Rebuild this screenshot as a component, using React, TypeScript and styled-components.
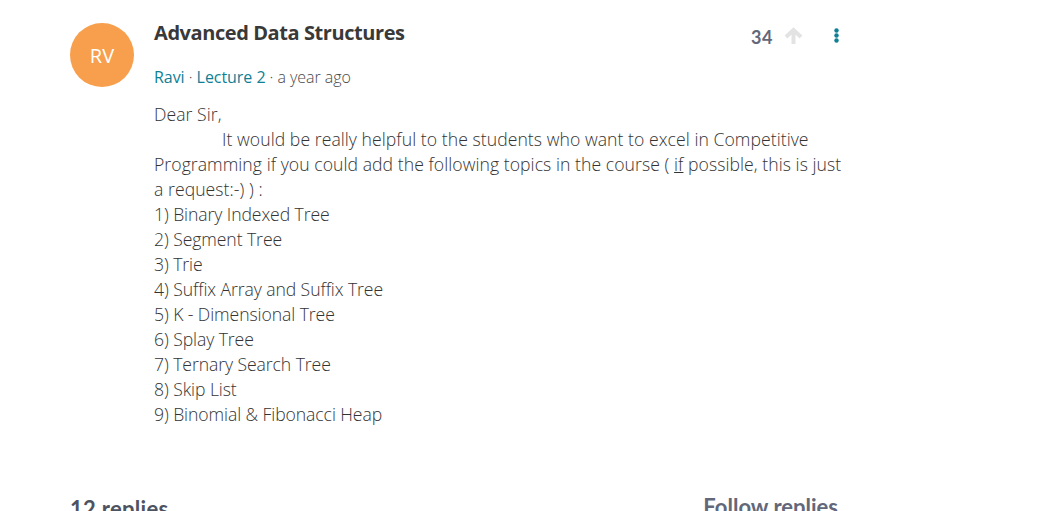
import React from "react";
import styled, {createGlobalStyle} from "styled-components";

const GlobalStyle = createGlobalStyle`
  html, body {
    margin: 0;
    height: 511px;
    overflow: hidden;
    background: #fff;
  }
`

const Page = styled.div`
  width: 1052px;
  height: 511px;
  overflow: hidden;
  box-sizing: border-box;
  padding: 23px 0 0 70px;
  font-family: "Open Sans", sans-serif;
`
const Thread = styled.div`
  display: flex;
  gap: 20px;
  width: 772px;
`
const Avatar = styled.div`
  width: 64px;
  height: 64px;
  flex: none;
  border-radius: 50%;
  background: #f79f4c;
  color: #fff;
  font-size: 20px;
  display: flex;
  align-items: center;
  justify-content: center;
`
const Content = styled.div`
  flex: 1;
  min-width: 0;
`
const TitleRow = styled.div`
  display: flex;
  justify-content: space-between;
  align-items: flex-start;
`
const Title = styled.h1`
  margin: -3px 0 0;
  font-size: 20px;
  line-height: 26px;
  font-weight: 700;
  color: #393939;
  letter-spacing: -0.42px;
`
const Votes = styled.div`
  display: flex;
  align-items: center;
  margin: 2px 0 0;
`
const Count = styled.span`
  margin-top: 1px;
  font-family: "Lato", sans-serif;
  font-size: 18px;
  font-weight: 700;
  color: #62687a;
  letter-spacing: 0.6px;
`
const UpIcon = styled.svg`
  display: block;
  margin: -3px 0 0 11px;
  fill: none;
  stroke: #e3e3e3;
  stroke-width: 4;
`
const MenuIcon = styled.svg`
  display: block;
  margin: -3px 3px 0 31px;
  fill: #0f7f95;
`
const Meta = styled.div`
  margin-top: 19px;
  font-size: 16px;
  line-height: 20px;
  color: #4a4a4a;
  font-weight: 300;
  letter-spacing: -0.05px;
`
const MetaLink = styled.a`
  color: #0f7f95;
  font-weight: 400;
  text-decoration: none;
`
const Body = styled.div`
  margin-top: 15px;
  font-size: 17.6px;
  line-height: 25px;
  font-weight: 300;
  color: #333;
  letter-spacing: 0.06px;
  white-space: nowrap;
`
const Indent = styled.span`
  display: inline-block;
  width: 68px;
`
const Misspelled = styled.span`
  text-decoration: underline;
`
const Topic = styled.div`
  letter-spacing: -0.08px;
`
const RepliesBar = styled.div`
  display: flex;
  justify-content: space-between;
  width: 768px;
  margin-top: 69px;
  font-family: "Lato", sans-serif;
  font-size: 22px;
  line-height: 26px;
  font-weight: 700;
  color: #4d5361;
  letter-spacing: 0.3px;
`
const FollowLabel = styled.span`
  margin-top: -2px;
  color: #62687a;
  letter-spacing: 0;
`

const topics = [
    "1) Binary Indexed Tree",
    "2) Segment Tree",
    "3) Trie",
    "4) Suffix Array and Suffix Tree",
    "5) K - Dimensional Tree",
    "6) Splay Tree",
    "7) Ternary Search Tree",
    "8) Skip List",
    "9) Binomial & Fibonacci Heap",
]

export default function App() {
    return (
        <Page>
            <GlobalStyle/>
            <Thread>
                <Avatar>RV</Avatar>
                <Content>
                    <TitleRow>
                        <Title>Advanced Data Structures</Title>
                        <Votes>
                            <Count>34</Count>
                            <UpIcon width="19" height="17" viewBox="0 0 19 17">
                                <path d="M2 10 L9.5 3 L17 10 M9.5 3 V17"/>
                            </UpIcon>
                            <MenuIcon width="5" height="15" viewBox="0 0 5 15">
                                <circle cx="2.5" cy="2.5" r="2.2"/>
                                <circle cx="2.5" cy="7.5" r="2.2"/>
                                <circle cx="2.5" cy="12.5" r="2.2"/>
                            </MenuIcon>
                        </Votes>
                    </TitleRow>
                    <Meta>
                        <MetaLink>Ravi</MetaLink> · <MetaLink>Lecture 2</MetaLink> · a year ago
                    </Meta>
                    <Body>
                        Dear Sir,<br/>
                        <Indent/>It would be really helpful to the students who want to excel in Competitive<br/>
                        Programming if you could add the following topics in the course ( <Misspelled>if</Misspelled> possible, this is just<br/>
                        a request:-) ) :<br/>
                        {topics.map(topic => (
                            <Topic key={topic}>{topic}</Topic>
                        ))}
                    </Body>
                </Content>
            </Thread>
            <RepliesBar>
                <span>12 replies</span>
                <FollowLabel>Follow replies</FollowLabel>
            </RepliesBar>
        </Page>
    );
}
